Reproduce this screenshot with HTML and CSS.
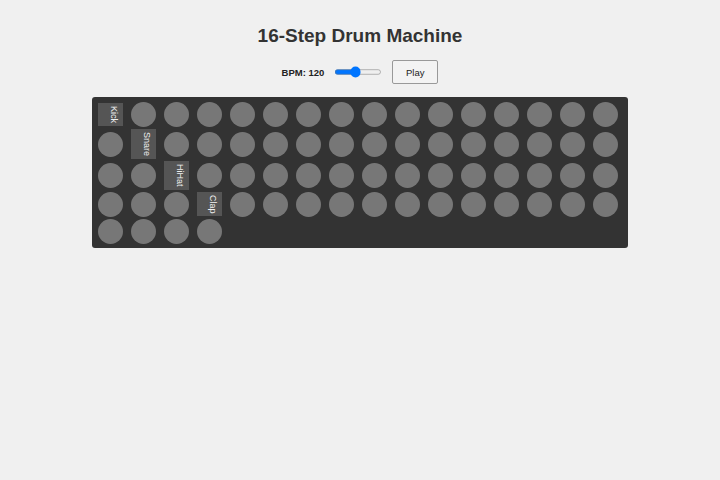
FILE: index.html
```html
<!DOCTYPE html>
<html lang="en">
<head>
  <meta charset="UTF-8">
  <meta name="viewport" content="width=device-width, initial-scale=1.0">
  <title>16-Step Drum Machine</title>
  <link rel="stylesheet" href="styles.css">
</head>
<body>
  <h1>16-Step Drum Machine</h1>
  <div class="controls">
    <label class="bpm-label" for="bpm">BPM: <span id="bpm-value">120</span></label>
    <input type="range" id="bpm" class="bpm-slider" min="60" max="200" value="120">
    <button id="play" class="play-btn">Play</button>
  </div>
  <div class="sequencer">
    <div id="grid" class="grid"></div>
  </div>

  <script>
    document.addEventListener("DOMContentLoaded", () => {
      const grid = document.getElementById("grid");
      const tracks = ["Kick", "Snare", "HiHat", "Clap"];
      const steps = 16;

      // each track is a name tag followed by its 16 step pads
      for (const name of tracks) {
        const label = document.createElement("div");
        label.className = "track-label";
        label.textContent = name;
        grid.appendChild(label);

        for (let i = 0; i < steps; i++) {
          const pad = document.createElement("div");
          pad.className = "step";
          pad.addEventListener("click", () => pad.classList.toggle("active"));
          grid.appendChild(pad);
        }
      }

      const slider = document.getElementById("bpm");
      const bpmValue = document.getElementById("bpm-value");
      slider.addEventListener("input", () => {
        bpmValue.textContent = slider.value;
      });
    });
  </script>
</body>
</html>
```

FILE: styles.css
```css
body {
  font-family: "Liberation Sans", Arial, sans-serif;
  margin: 0;
  padding: 0;
  background-color: #f0f0f0;
  color: #333;
}
h1 {
  text-align: center;
  font-size: 19px;
  line-height: 22px;
  margin: 25px 0 13px;
}
.controls {
  display: flex;
  justify-content: center;
  align-items: center;
  gap: 10px;
  height: 24px;
  margin-bottom: 13px;
}
.bpm-label {
  font-size: 9.5px;
  font-weight: bold;
  color: #222;
}
/* the native slider is scaled down to fit the small toolbar */
.bpm-slider {
  zoom: 0.7;
  width: 68px;
  margin: 0;
}
.play-btn {
  height: 24px;
  padding: 0 13px;
  font-family: inherit;
  font-size: 9.5px;
  color: #222;
  background: #f3f3f3;
  border: 1px solid #999;
  border-radius: 2px;
}
.sequencer {
  box-sizing: border-box;
  width: 536px;
  margin: 0 auto;
  padding: 5px 6px 4px;
  background: #333;
  border-radius: 3px;
}
.grid {
  display: grid;
  grid-template-columns: repeat(16, 25px);
  column-gap: 8px;
  row-gap: 2px;
  align-items: center;
}
.step {
  width: 25px;
  height: 25px;
  border-radius: 50%;
  background: #777;
  cursor: pointer;
}
.step.active {
  background: #e74c3c;
}
.track-label {
  box-sizing: border-box;
  width: 25px;
  padding: 3px 4px;
  writing-mode: vertical-rl;
  font-size: 9px;
  color: #eee;
  background: #555;
}
```
